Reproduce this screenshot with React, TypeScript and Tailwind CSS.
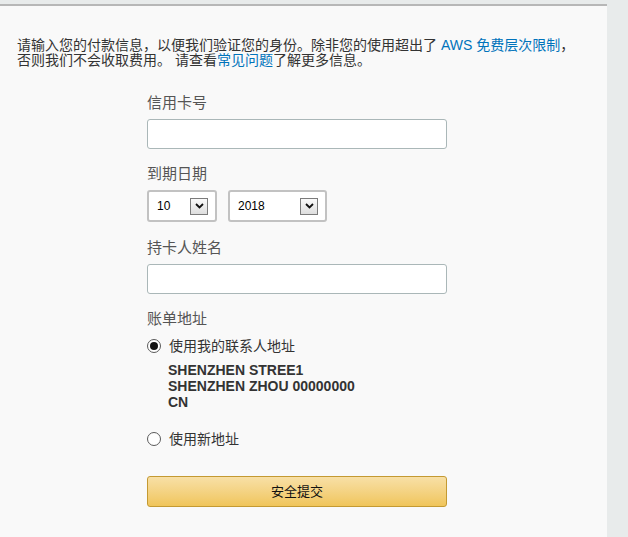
import React, { useState } from 'react';

const FONT = { fontFamily: '"Liberation Sans", Arial, "Noto Sans CJK SC", sans-serif' };

function Chevron() {
  return (
    <svg width="9" height="6" viewBox="0 0 9 6" fill="none">
      <path d="M1 1 L4.5 4.5 L8 1" stroke="#111" strokeWidth="1.8" />
    </svg>
  );
}

function FakeSelect({ value, width }: { value: string; width: string }) {
  return (
    <div className={`${width} h-[32px] bg-white border-2 border-[#c2c2c2] rounded-[3px] flex items-center pl-[8px] pr-[7px]`}>
      <span className="flex-1 text-[12px] text-black">{value}</span>
      <span className="w-[18px] h-[17px] border border-[#7b7b7b] bg-gradient-to-b from-[#fafafa] to-[#dedede] flex items-center justify-center">
        <Chevron />
      </span>
    </div>
  );
}

function Radio({ checked, onClick }: { checked: boolean; onClick: () => void }) {
  return (
    <span
      onClick={onClick}
      className="w-[14px] h-[14px] rounded-full border border-[#5a5a5a] bg-white flex items-center justify-center shrink-0"
    >
      {checked && <span className="w-[8px] h-[8px] rounded-full bg-[#111]" />}
    </span>
  );
}

export default function App() {
  const [useContact, setUseContact] = useState(true);

  return (
    <div className="w-[628px] h-[537px] bg-[#e8ebeb] pt-[4px] flex overflow-hidden" style={FONT}>
      <div className="w-[607px] h-full bg-[#f9f9f9] border-t-2 border-[#b7b7b7]">
        {/* intro */}
        <p className="pt-[32px] pl-[17px] text-[14px] leading-[15px] text-[#333]">
          请输入您的付款信息，以便我们验证您的身份。除非您的使用超出了{' '}
          <a className="text-[#0073bb]">AWS 免费层次限制</a>，
          <br />
          否则我们不会收取费用。 请查看<a className="text-[#0073bb]">常见问题</a>了解更多信息。
        </p>

        <div className="ml-[147px] w-[300px] mt-[25px]">
          <div className="h-5 leading-5 text-[15px] text-[#555] mb-[6px]">信用卡号</div>
          <input className="block w-full h-[30px] bg-white border border-[#aab7b8] rounded-[3px] outline-none px-2 text-[13px]" />

          <div className="h-5 leading-5 text-[15px] text-[#555] mt-[15px] mb-[6px]">到期日期</div>
          <div className="flex gap-[11px]">
            <FakeSelect value="10" width="w-[70px]" />
            <FakeSelect value="2018" width="w-[99px]" />
          </div>

          <div className="h-5 leading-5 text-[15px] text-[#555] mt-[16px] mb-[6px]">持卡人姓名</div>
          <input className="block w-full h-[30px] bg-white border border-[#aab7b8] rounded-[3px] outline-none px-2 text-[13px]" />

          <div className="h-5 leading-5 text-[15px] text-[#555] mt-[15px]">账单地址</div>

          <label className="flex items-center gap-[8px] mt-[9px] h-4 text-[14px] text-[#333]">
            <Radio checked={useContact} onClick={() => setUseContact(true)} />
            使用我的联系人地址
          </label>
          <div className="ml-[21px] mt-[8px] text-[14px] leading-4 font-bold text-[#333]">
            <div>SHENZHEN STREE1</div>
            <div>SHENZHEN ZHOU 00000000</div>
            <div>CN</div>
          </div>

          <label className="flex items-center gap-[8px] mt-[21px] h-4 text-[14px] text-[#333]">
            <Radio checked={!useContact} onClick={() => setUseContact(false)} />
            使用新地址
          </label>

          <button className="mt-[29px] w-full h-[31px] rounded-[3px] border border-[#c49a32] bg-gradient-to-b from-[#f8e0a6] to-[#f0c55a] text-[13px] text-[#111]">
            安全提交
          </button>
        </div>
      </div>
    </div>
  );
}
